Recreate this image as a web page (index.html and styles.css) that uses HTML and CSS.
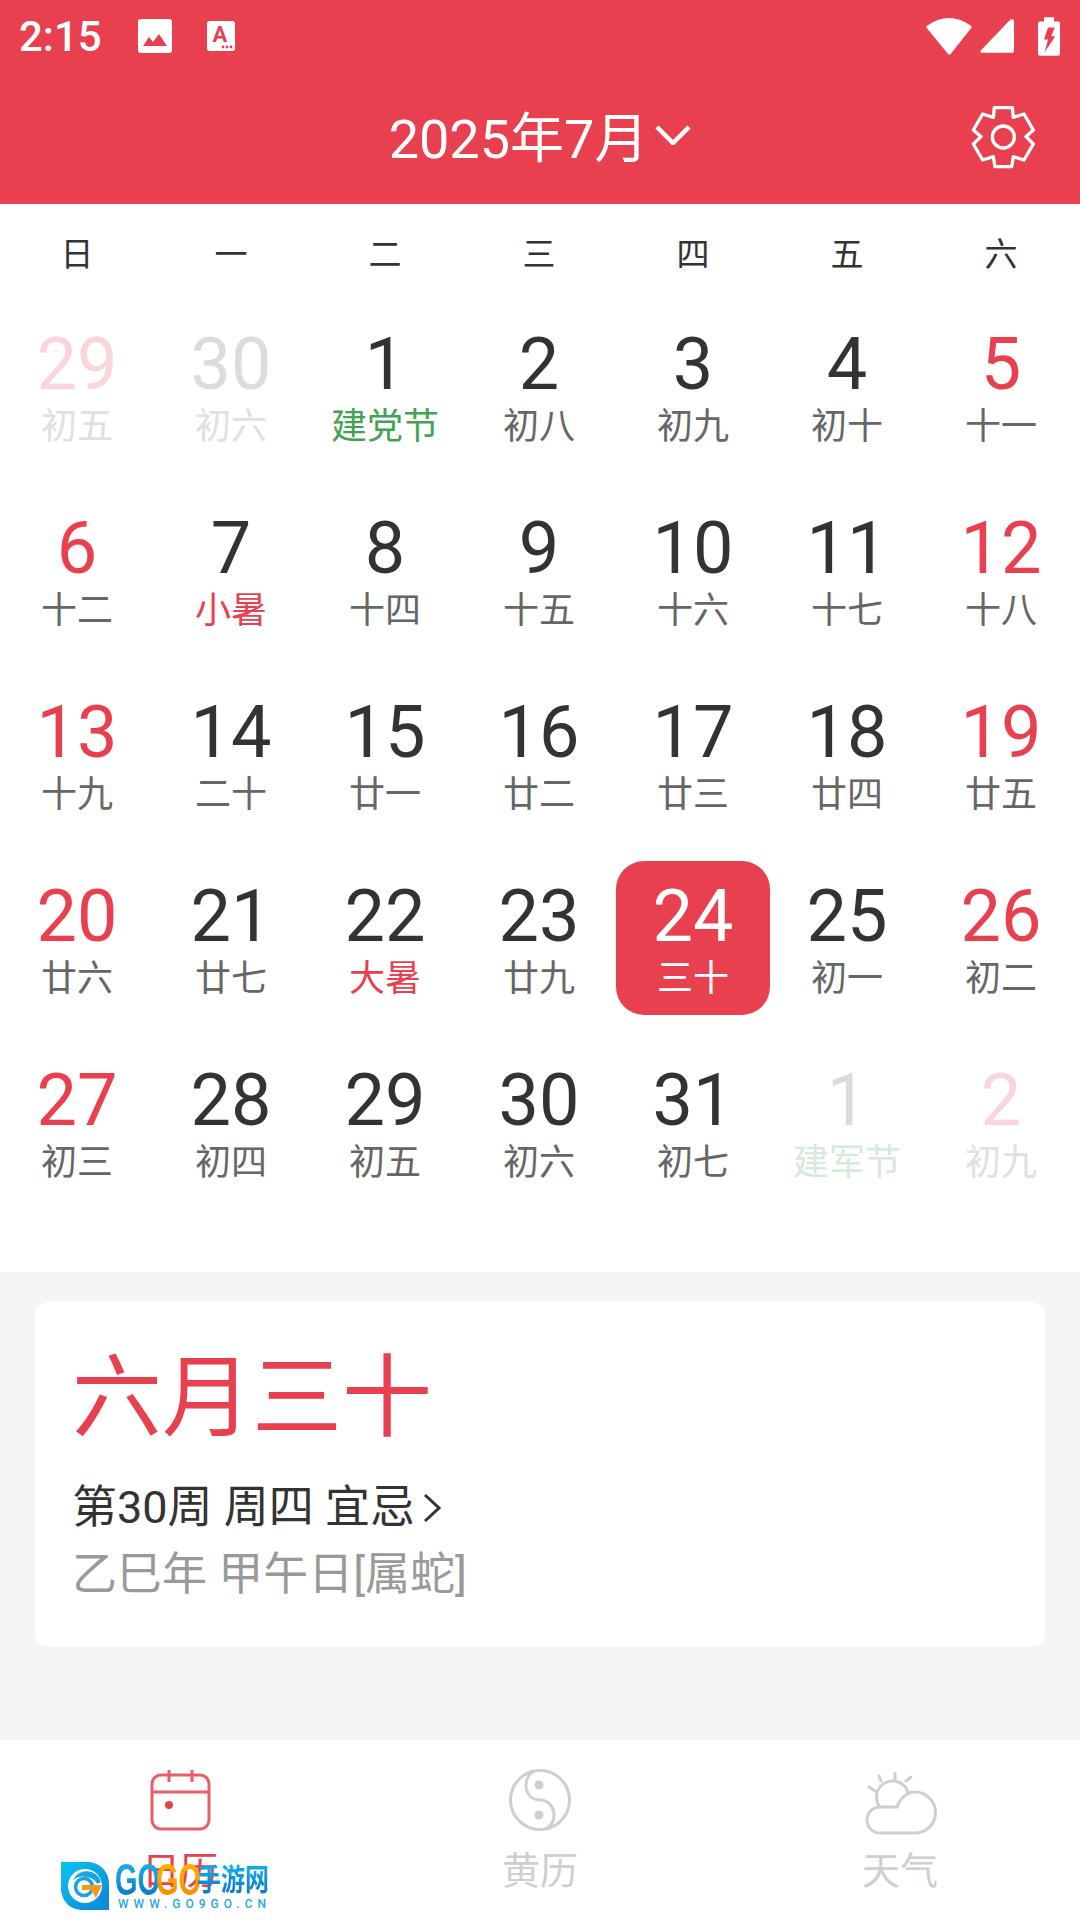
FILE: index.html
```html
<!DOCTYPE html>
<html>
<head>
  <title>Calendar</title>
  <link rel="stylesheet" href="styles.css">
</head>
<body>
  <div class="page">
    <div class="header">
      <div class="status">
        <span class="time">2:15</span>
        <svg class="st-image" viewBox="0 0 34 34"><rect width="34" height="34" rx="3" fill="#fff"/><path d="M5 27 L11 18 L15 23 L21 15 L29 27 Z" fill="#e9404f"/></svg>
        <svg class="st-font" viewBox="0 0 28 30"><rect width="28" height="30" rx="2.5" fill="#fff"/><text x="13" y="21" class="st-a">A</text><circle cx="16" cy="26" r="1.4" fill="#e9404f"/><circle cx="20" cy="26" r="1.4" fill="#e9404f"/><circle cx="24" cy="26" r="1.4" fill="#e9404f"/></svg>
        <span class="status-space"></span>
        <svg class="st-wifi" viewBox="78 50 136 110"><path d="M82 72 Q146 28 210 72 Q215 76 212 80 L151 157 Q147 161 143 157 L80 80 Q76 76 82 72 Z" fill="#fff"/></svg>
        <svg class="st-signal" viewBox="240 60 102 100"><path d="M243 153 L330 62 Q334 59 338 60 Q342 61 342 66 L342 155 Q342 160 337 160 L245 160 Q238 159 243 153 Z" fill="#fff"/></svg>
        <svg class="st-battery" viewBox="414 45 66 116"><path d="M432 45 H462 V58 H474 Q480 58 480 64 V155 Q480 161 474 161 H420 Q414 161 414 155 V64 Q414 58 420 58 H432 Z" fill="#fff"/><path d="M444 76 H464 L454 102 H466 L434 150 L444 112 H432 Z" fill="#e9404f"/></svg>
      </div>
      <div class="titlebar">
        <span></span>
        <div class="month">
          <span>2025年7月</span>
          <svg class="month-arrow" viewBox="0 0 36 20"><path d="M2 2 L18 18 L34 2" fill="none" stroke="#fff" stroke-width="4.5"/></svg>
        </div>
        <svg class="gear" viewBox="210 312 198 198"><path d="M283 323 H337 L340 352 L372 342 L400 390 L378 410 L400 432 L372 480 L340 470 L335 500 H285 L280 470 L248 480 L220 432 L243 410 L220 390 L248 342 L280 352 Z" fill="none" stroke="#fff" stroke-width="10" stroke-linejoin="round"/><circle cx="310" cy="411" r="33" fill="none" stroke="#fff" stroke-width="10"/></svg>
      </div>
    </div>

    <div class="weekdays">
      <span>日</span><span>一</span><span>二</span><span>三</span><span>四</span><span>五</span><span>六</span>
    </div>

    <div class="month-grid">
      <div class="cell faded-red"><div class="num">29</div><div class="lunar">初五</div></div>
      <div class="cell faded"><div class="num">30</div><div class="lunar">初六</div></div>
      <div class="cell holiday"><div class="num">1</div><div class="lunar">建党节</div></div>
      <div class="cell"><div class="num">2</div><div class="lunar">初八</div></div>
      <div class="cell"><div class="num">3</div><div class="lunar">初九</div></div>
      <div class="cell"><div class="num">4</div><div class="lunar">初十</div></div>
      <div class="cell weekend"><div class="num">5</div><div class="lunar">十一</div></div>

      <div class="cell weekend"><div class="num">6</div><div class="lunar">十二</div></div>
      <div class="cell term"><div class="num">7</div><div class="lunar">小暑</div></div>
      <div class="cell"><div class="num">8</div><div class="lunar">十四</div></div>
      <div class="cell"><div class="num">9</div><div class="lunar">十五</div></div>
      <div class="cell"><div class="num">10</div><div class="lunar">十六</div></div>
      <div class="cell"><div class="num">11</div><div class="lunar">十七</div></div>
      <div class="cell weekend"><div class="num">12</div><div class="lunar">十八</div></div>

      <div class="cell weekend"><div class="num">13</div><div class="lunar">十九</div></div>
      <div class="cell"><div class="num">14</div><div class="lunar">二十</div></div>
      <div class="cell"><div class="num">15</div><div class="lunar">廿一</div></div>
      <div class="cell"><div class="num">16</div><div class="lunar">廿二</div></div>
      <div class="cell"><div class="num">17</div><div class="lunar">廿三</div></div>
      <div class="cell"><div class="num">18</div><div class="lunar">廿四</div></div>
      <div class="cell weekend"><div class="num">19</div><div class="lunar">廿五</div></div>

      <div class="cell weekend"><div class="num">20</div><div class="lunar">廿六</div></div>
      <div class="cell"><div class="num">21</div><div class="lunar">廿七</div></div>
      <div class="cell term"><div class="num">22</div><div class="lunar">大暑</div></div>
      <div class="cell"><div class="num">23</div><div class="lunar">廿九</div></div>
      <div class="cell today"><div class="num">24</div><div class="lunar">三十</div></div>
      <div class="cell"><div class="num">25</div><div class="lunar">初一</div></div>
      <div class="cell weekend"><div class="num">26</div><div class="lunar">初二</div></div>

      <div class="cell weekend"><div class="num">27</div><div class="lunar">初三</div></div>
      <div class="cell"><div class="num">28</div><div class="lunar">初四</div></div>
      <div class="cell"><div class="num">29</div><div class="lunar">初五</div></div>
      <div class="cell"><div class="num">30</div><div class="lunar">初六</div></div>
      <div class="cell"><div class="num">31</div><div class="lunar">初七</div></div>
      <div class="cell faded holiday-faded"><div class="num">1</div><div class="lunar">建军节</div></div>
      <div class="cell faded-red"><div class="num">2</div><div class="lunar">初九</div></div>
    </div>

    <div class="detail">
      <div class="card">
        <div class="card-date">六月三十</div>
        <div class="card-line">第30周 周四 宜忌<svg class="card-arrow" viewBox="0 0 18 30"><path d="M2 2 L16 15 L2 28" fill="none" stroke="#333" stroke-width="3"/></svg></div>
        <div class="card-line card-grey">乙巳年 甲午日[属蛇]</div>
      </div>
    </div>

    <div class="tabs">
      <div class="tab tab-on">
        <svg class="tab-icon" viewBox="-1 0 80 70"><g fill="none" stroke="#e9404f" stroke-width="3" opacity=".85"><rect x="11" y="8" width="57" height="54" rx="9"/><path d="M11 25 H68 M28 3 V15 M51 3 V15"/></g><circle cx="28" cy="38" r="4" fill="#e9404f"/></svg>
        <div class="tab-label">日历</div>
      </div>
      <div class="tab">
        <svg class="tab-icon" viewBox="0 2 80 70"><g fill="none" stroke="#cfcfcf" stroke-width="3"><circle cx="40" cy="35" r="29.5"/><path d="M33 6 C21 16 25 35 40 35 C55 35 60 57 45 64"/></g><circle cx="39" cy="20" r="4.5" fill="#cfcfcf"/><circle cx="39" cy="50" r="4.5" fill="#cfcfcf"/></svg>
        <div class="tab-label">黄历</div>
      </div>
      <div class="tab">
        <svg class="tab-icon" viewBox="860 1767 80 70"><g fill="none" stroke="#cfcfcf" stroke-width="3" stroke-linecap="round"><path d="M880 1807 H897 C900 1798 907 1792 915 1792 A20.5 20.5 0 0 1 915 1833 H880 A13 13 0 0 1 880 1807 Z"/><path d="M880 1807 A16 16 0 1 1 908 1793"/><path d="M869 1787 L875 1791 M879 1776 L881 1781 M895 1773 V1779 M911 1777 L906 1781"/></g></svg>
        <div class="tab-label">天气</div>
      </div>
    </div>

    <div class="logo">
      <svg class="logo-mark" viewBox="0 0 48 48"><defs><linearGradient id="lg" x1="0" y1="0" x2="1" y2="1"><stop offset="0" stop-color="#0cc4ee"/><stop offset="1" stop-color="#0a86d8"/></linearGradient></defs><path d="M0 0 H26 C39 0 48 10 48 22 V48 H22 C9 48 0 39 0 26 Z" fill="url(#lg)"/><circle cx="24" cy="24" r="17" fill="#fff"/><path d="M40 20 A15 15 0 0 0 12 18 A14 10 0 0 1 36 22 Z" fill="#16a4e4"/><circle cx="23" cy="25" r="8.5" fill="none" stroke="#16a4e4" stroke-width="3.5"/><path d="M21 23 H41 L35 36 L30 28 H21 Z" fill="#f39a1d"/></svg>
      <div class="logo-text">
        <div class="logo-top">
          <span class="logo-go">GO</span><span class="logo-go logo-go2">GO</span><span class="logo-cn">手游网</span>
        </div>
        <div class="logo-url">WWW.GO9GO.CN</div>
      </div>
    </div>
  </div>
</body>
</html>
```
FILE: styles.css
```css
* { box-sizing: border-box; }
body { margin: 0; background: #fff; font-family: Roboto, "Noto Sans CJK SC", sans-serif; color: #333; }
.page { position: relative; width: 1080px; height: 1920px; display: flex; flex-direction: column; overflow: hidden; }

.header { height: 204px; background: #e9404f; color: #fff; }
.status { height: 72px; display: flex; align-items: center; padding: 0 20px 0 19px; }
.time { font-size: 42px; font-weight: 500; width: 119px; }
.st-image { width: 34px; height: 34px; }
.st-font { width: 28px; height: 30px; margin-left: 35px; }
.st-a { font: 700 22px Roboto, sans-serif; fill: #e9404f; text-anchor: middle; }
.status-space { flex: 1; }
.st-wifi { width: 46px; height: 37px; }
.st-signal { width: 34px; height: 34px; margin-left: 8px; }
.st-battery { width: 22px; height: 39px; margin-left: 24px; }

.titlebar { height: 132px; display: grid; grid-template-columns: 1fr auto 1fr; align-items: center; padding-right: 44px; }
.month { display: flex; align-items: center; font-size: 54px; gap: 7px; margin: 0 0 7px 44px; }
.month-arrow { width: 36px; height: 20px; }
.gear { width: 66px; height: 66px; justify-self: end; margin-top: -2px; }

.weekdays { height: 100px; display: grid; grid-template-columns: repeat(7, 154px); align-items: center; text-align: center; font-size: 33px; padding-bottom: 5px; }

.month-grid { display: grid; grid-template-columns: repeat(7, 154px); grid-auto-rows: 154px; row-gap: 30px; padding: 5px 0 73px; }
.cell { padding-top: 20px; text-align: center; border-radius: 28px; }
.num { font-size: 72px; line-height: 72px; }
.lunar { font-size: 36px; line-height: 44px; margin-top: 4px; color: #666; }

.weekend .num { color: #e9404f; }
.term .lunar { color: #e9404f; }
.holiday .lunar { color: #43a352; }
.faded .num { color: #dcdcdc; }
.faded .lunar { color: #e0e0e0; }
.faded-red .num { color: #fad5d9; }
.faded-red .lunar { color: #e0e0e0; }
.holiday-faded .lunar { color: #d5ead9; }
.today { background: #e9404f; }
.today .num, .today .lunar { color: #fff; }

.detail { flex: 1; background: #f5f5f5; padding: 30px 35px 0; }
.card { height: 345px; background: #fff; border-radius: 14px; padding: 47px 0 0 37px; }
.card-date { font-size: 90px; line-height: 100px; color: #e9404f; margin-bottom: 25px; }
.card-line { font-size: 45px; line-height: 67px; display: flex; align-items: center; }
.card-grey { color: #999; }
.card-arrow { width: 18px; height: 30px; margin-left: 8px; }

.tabs { height: 181px; border-top: 1px solid #eee; display: grid; grid-template-columns: repeat(3, 1fr); background: #fff; }
.tab { display: flex; flex-direction: column; align-items: center; padding-top: 27px; }
.tab-icon { width: 80px; height: 70px; }
.tab-label { font-size: 38px; line-height: 44px; margin-top: 12px; color: #cfcfcf; }
.tab-on .tab-label { color: #e9404f; }

/* watermark sits over the tab bar */
.logo { position: absolute; left: 61px; top: 1862px; display: flex; gap: 6px; }
.logo-mark { width: 48px; height: 48px; }
.logo-text { width: 152px; }
.logo-top { display: flex; height: 36px; align-items: center; font-weight: 700; }
.logo-go { font-family: "Liberation Sans", sans-serif; font-size: 44px; line-height: 36px; width: 70px; margin-right: -29px; flex: none; transform: scaleX(.66); transform-origin: left center; background: linear-gradient(#1cb0ee, #0a78c8); -webkit-background-clip: text; background-clip: text; color: transparent; white-space: nowrap; }
.logo-go2 { background-image: linear-gradient(#ffb300, #f58c00); }
.logo-cn { font-size: 30px; line-height: 36px; flex: none; transform: scaleX(.8); transform-origin: left center; background: linear-gradient(#12b4ee, #0a6fc4); -webkit-background-clip: text; background-clip: text; color: transparent; white-space: nowrap; }
.logo-url { font-size: 12px; line-height: 12px; font-weight: 500; color: #2aa5e6; letter-spacing: 5px; margin-left: 3px; white-space: nowrap; }
```
